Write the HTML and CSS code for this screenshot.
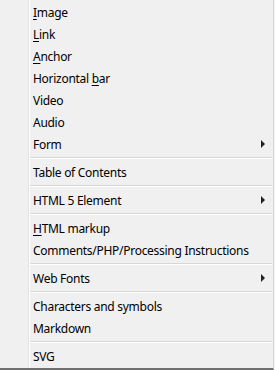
FILE: index.html
```html
<!DOCTYPE html>
<html lang="en">
<head>
    <meta charset="UTF-8">
    <title>Insert menu</title>
    <link rel="stylesheet" href="styles.css">
</head>
<body>

    <div class="menu">
        <div class="gutter"></div>
        <ul class="items">
            <li class="item"><span><u>I</u>mage</span></li>
            <li class="item"><span><u>L</u>ink</span></li>
            <li class="item"><span><u>A</u>nchor</span></li>
            <li class="item"><span>Horizontal <u>b</u>ar</span></li>
            <li class="item"><span>Video</span></li>
            <li class="item"><span>Audio</span></li>
            <li class="item sub"><span>Form</span></li>
            <li class="sep"></li>
            <li class="item"><span>Table of Contents</span></li>
            <li class="sep"></li>
            <li class="item sub"><span>HTML 5 Element</span></li>
            <li class="sep"></li>
            <li class="item"><span><u>H</u>TML markup</span></li>
            <li class="item"><span>Comments/PHP/Processing Instructions</span></li>
            <li class="sep"></li>
            <li class="item sub"><span>Web Fonts</span></li>
            <li class="sep"></li>
            <li class="item"><span>Characters and symbols</span></li>
            <li class="item"><span>Markdown</span></li>
            <li class="sep"></li>
            <li class="item"><span>SVG</span></li>
        </ul>
    </div>

</body>
</html>
```

FILE: styles.css
```css
body {
    margin: 0;
    background: #f0f0f0;
    font-family: 'Noto Sans', 'Open Sans', sans-serif;
    font-size: 12px;
    letter-spacing: -0.28px;
    color: #000;
}

.menu {
    display: flex;
    width: 273px;
    height: 368px;
    border-right: 1px solid #d8d8d8;
    border-bottom: 2px solid #707070;
    background: #f0f0f0;
}

.gutter {
    width: 28px;
    border-right: 1px solid #e2e3e3;
}

.items {
    flex: 1;
    list-style: none;
    margin: 0;
    padding: 1px 0 0 0;
    border-left: 1px solid #fff;
}

.item {
    display: flex;
    align-items: center;
    justify-content: space-between;
    height: 22px;
    padding: 0 8px 0 3px;
    white-space: nowrap;
}

.item u {
    text-decoration-thickness: 1px;
    text-underline-offset: 2px;
}

/* submenu arrow */
.sub::after {
    content: "";
    width: 0;
    height: 0;
    border-top: 4px solid transparent;
    border-bottom: 4px solid transparent;
    border-left: 4px solid #222;
}

.sep {
    height: 1px;
    margin: 2px 1px 2px 0;
    background: #d7d7d7;
    border-bottom: 1px solid #fff;
}
```
